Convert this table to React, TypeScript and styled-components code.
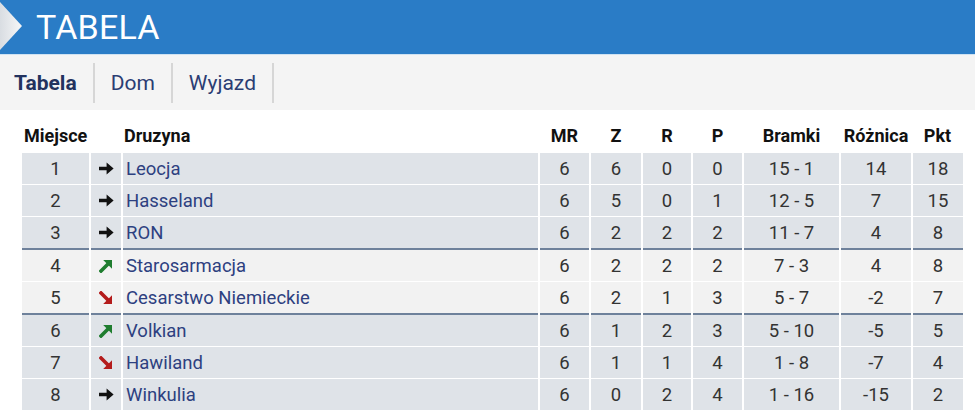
import React from 'react';
import styled, { createGlobalStyle } from 'styled-components';

type Trend = 'same' | 'up' | 'down';

interface Row {
  pos: number;
  trend: Trend;
  team: string;
  mr: number;
  z: number;
  r: number;
  p: number;
  goals: string;
  diff: number;
  pts: number;
  zone: 'top' | 'mid' | 'low';
}

const rows: Row[] = [
  { pos: 1, trend: 'same', team: 'Leocja', mr: 6, z: 6, r: 0, p: 0, goals: '15 - 1', diff: 14, pts: 18, zone: 'top' },
  { pos: 2, trend: 'same', team: 'Hasseland', mr: 6, z: 5, r: 0, p: 1, goals: '12 - 5', diff: 7, pts: 15, zone: 'top' },
  { pos: 3, trend: 'same', team: 'RON', mr: 6, z: 2, r: 2, p: 2, goals: '11 - 7', diff: 4, pts: 8, zone: 'top' },
  { pos: 4, trend: 'up', team: 'Starosarmacja', mr: 6, z: 2, r: 2, p: 2, goals: '7 - 3', diff: 4, pts: 8, zone: 'mid' },
  { pos: 5, trend: 'down', team: 'Cesarstwo Niemieckie', mr: 6, z: 2, r: 1, p: 3, goals: '5 - 7', diff: -2, pts: 7, zone: 'mid' },
  { pos: 6, trend: 'up', team: 'Volkian', mr: 6, z: 1, r: 2, p: 3, goals: '5 - 10', diff: -5, pts: 5, zone: 'low' },
  { pos: 7, trend: 'down', team: 'Hawiland', mr: 6, z: 1, r: 1, p: 4, goals: '1 - 8', diff: -7, pts: 4, zone: 'low' },
  { pos: 8, trend: 'same', team: 'Winkulia', mr: 6, z: 0, r: 2, p: 4, goals: '1 - 16', diff: -15, pts: 2, zone: 'low' },
];

const GlobalStyle = createGlobalStyle`
  body {
    margin: 0;
    background: #fff;
    font-family: Roboto, "Liberation Sans", sans-serif;
  }
`;

const TrendIcon = ({ trend }: { trend: Trend }) => {
  if (trend === 'same') {
    return (
      <svg width="15" height="13" viewBox="0 0 15 13">
        <path d="M0 4.8h7.6V0.6l7 5.9-7 5.9V8.2H0z" fill="#111" />
      </svg>
    );
  }
  const color = trend === 'up' ? '#1f7d2f' : '#b41c1c';
  return (
    <svg width="14" height="14" viewBox="0 0 14 14">
      <g transform={trend === 'down' ? 'scale(1,-1) translate(0,-14)' : undefined}>
        <path d="M2 12L9 5" stroke={color} strokeWidth="3.6" strokeLinecap="square" />
        <path d="M4.2 1h8.8v8.8z" fill={color} />
      </g>
    </svg>
  );
};

const App = () => {
  return (
    <Page>
      <GlobalStyle />
      <Header>
        <Chevron />
        <Title>TABELA</Title>
      </Header>
      <Tabs>
        <Tab active>Tabela</Tab>
        <Tab>Dom</Tab>
        <Tab>Wyjazd</Tab>
      </Tabs>
      <TableWrap>
        <Table>
          <colgroup>
            <col style={{ width: 68 }} />
            <col style={{ width: 32 }} />
            <col style={{ width: 417 }} />
            <col style={{ width: 51 }} />
            <col style={{ width: 52 }} />
            <col style={{ width: 50 }} />
            <col style={{ width: 51 }} />
            <col style={{ width: 97 }} />
            <col style={{ width: 72 }} />
            <col style={{ width: 51 }} />
          </colgroup>
          <thead>
            <tr>
              <Th colSpan={2} align="left">Miejsce</Th>
              <Th align="left">Druzyna</Th>
              <Th>MR</Th>
              <Th>Z</Th>
              <Th>R</Th>
              <Th>P</Th>
              <Th>Bramki</Th>
              <Th>Różnica</Th>
              <Th>Pkt</Th>
            </tr>
          </thead>
          <tbody>
            {rows.map((row, i) => {
              const next = rows[i + 1];
              const split = !!next && next.zone !== row.zone;
              return (
                <Tr key={row.pos} zone={row.zone} split={split}>
                  <Td>{row.pos}</Td>
                  <IconCell>
                    <TrendIcon trend={row.trend} />
                  </IconCell>
                  <TeamCell>{row.team}</TeamCell>
                  <Td>{row.mr}</Td>
                  <Td>{row.z}</Td>
                  <Td>{row.r}</Td>
                  <Td>{row.p}</Td>
                  <Td>{row.goals}</Td>
                  <Td>{row.diff}</Td>
                  <Td>{row.pts}</Td>
                </Tr>
              );
            })}
          </tbody>
        </Table>
      </TableWrap>
    </Page>
  );
};

const Page = styled.div`
  width: 975px;
  height: 418px;
  overflow: hidden;
`;

const Header = styled.div`
  position: relative;
  height: 54px;
  background: #2a7cc6;
  border-bottom: 1px solid #cfe2f2;
  display: flex;
  align-items: center;
  padding-left: 36px;
`;

const Chevron = styled.div`
  position: absolute;
  left: 0;
  top: 2px;
  width: 22px;
  height: 48px;
  background: linear-gradient(90deg, #d9dde2, #f6f7f8);
  clip-path: polygon(0 0, 100% 50%, 0 100%);
`;

const Title = styled.h1`
  margin: 0;
  font-size: 34px;
  font-weight: 400;
  color: #fff;
  letter-spacing: 0.2px;
`;

const Tabs = styled.div`
  height: 55px;
  background: #f4f4f4;
  display: flex;
  align-items: center;
`;

const Tab = styled.div<{ active?: boolean }>`
  height: 40px;
  display: flex;
  align-items: center;
  padding: 0 16px 0 ${({ active }) => (active ? '14px' : '16px')};
  border-right: 2px solid #d6d6d6;
  font-size: 21px;
  font-weight: ${({ active }) => (active ? 700 : 400)};
  color: ${({ active }) => (active ? '#22325e' : '#2b3d73')};
`;

const TableWrap = styled.div`
  padding: 8px 0 0 22px;
`;

const Table = styled.table`
  width: 941px;
  border-collapse: collapse;
  table-layout: fixed;
  font-size: 18.5px;
  color: #333;
`;

const Th = styled.th<{ align?: 'left' | 'center' }>`
  height: 35px;
  padding: 0 ${({ align }) => (align === 'left' ? '2px' : '0')};
  text-align: ${({ align }) => align || 'center'};
  font-size: 18px;
  font-weight: 700;
  color: #111;
  white-space: nowrap;
`;

const zoneBg = { top: '#dfe3e8', mid: '#f2f2f2', low: '#dfe3e8' };

const Tr = styled.tr<{ zone: 'top' | 'mid' | 'low'; split: boolean }>`
  background: ${({ zone }) => zoneBg[zone]};
  border-bottom: ${({ split }) => (split ? '2px solid #6e819b' : '1px solid #fff')};
`;

const Td = styled.td`
  height: 31px;
  padding: 0;
  text-align: center;
  border-right: 2px solid #fff;
  white-space: nowrap;
  &:last-child {
    border-right: none;
  }
`;

const IconCell = styled(Td)`
  svg {
    display: block;
    margin: 0 auto;
  }
`;

const TeamCell = styled(Td)`
  text-align: left;
  padding-left: 3px;
  color: #2d4080;
`;

export default App;
